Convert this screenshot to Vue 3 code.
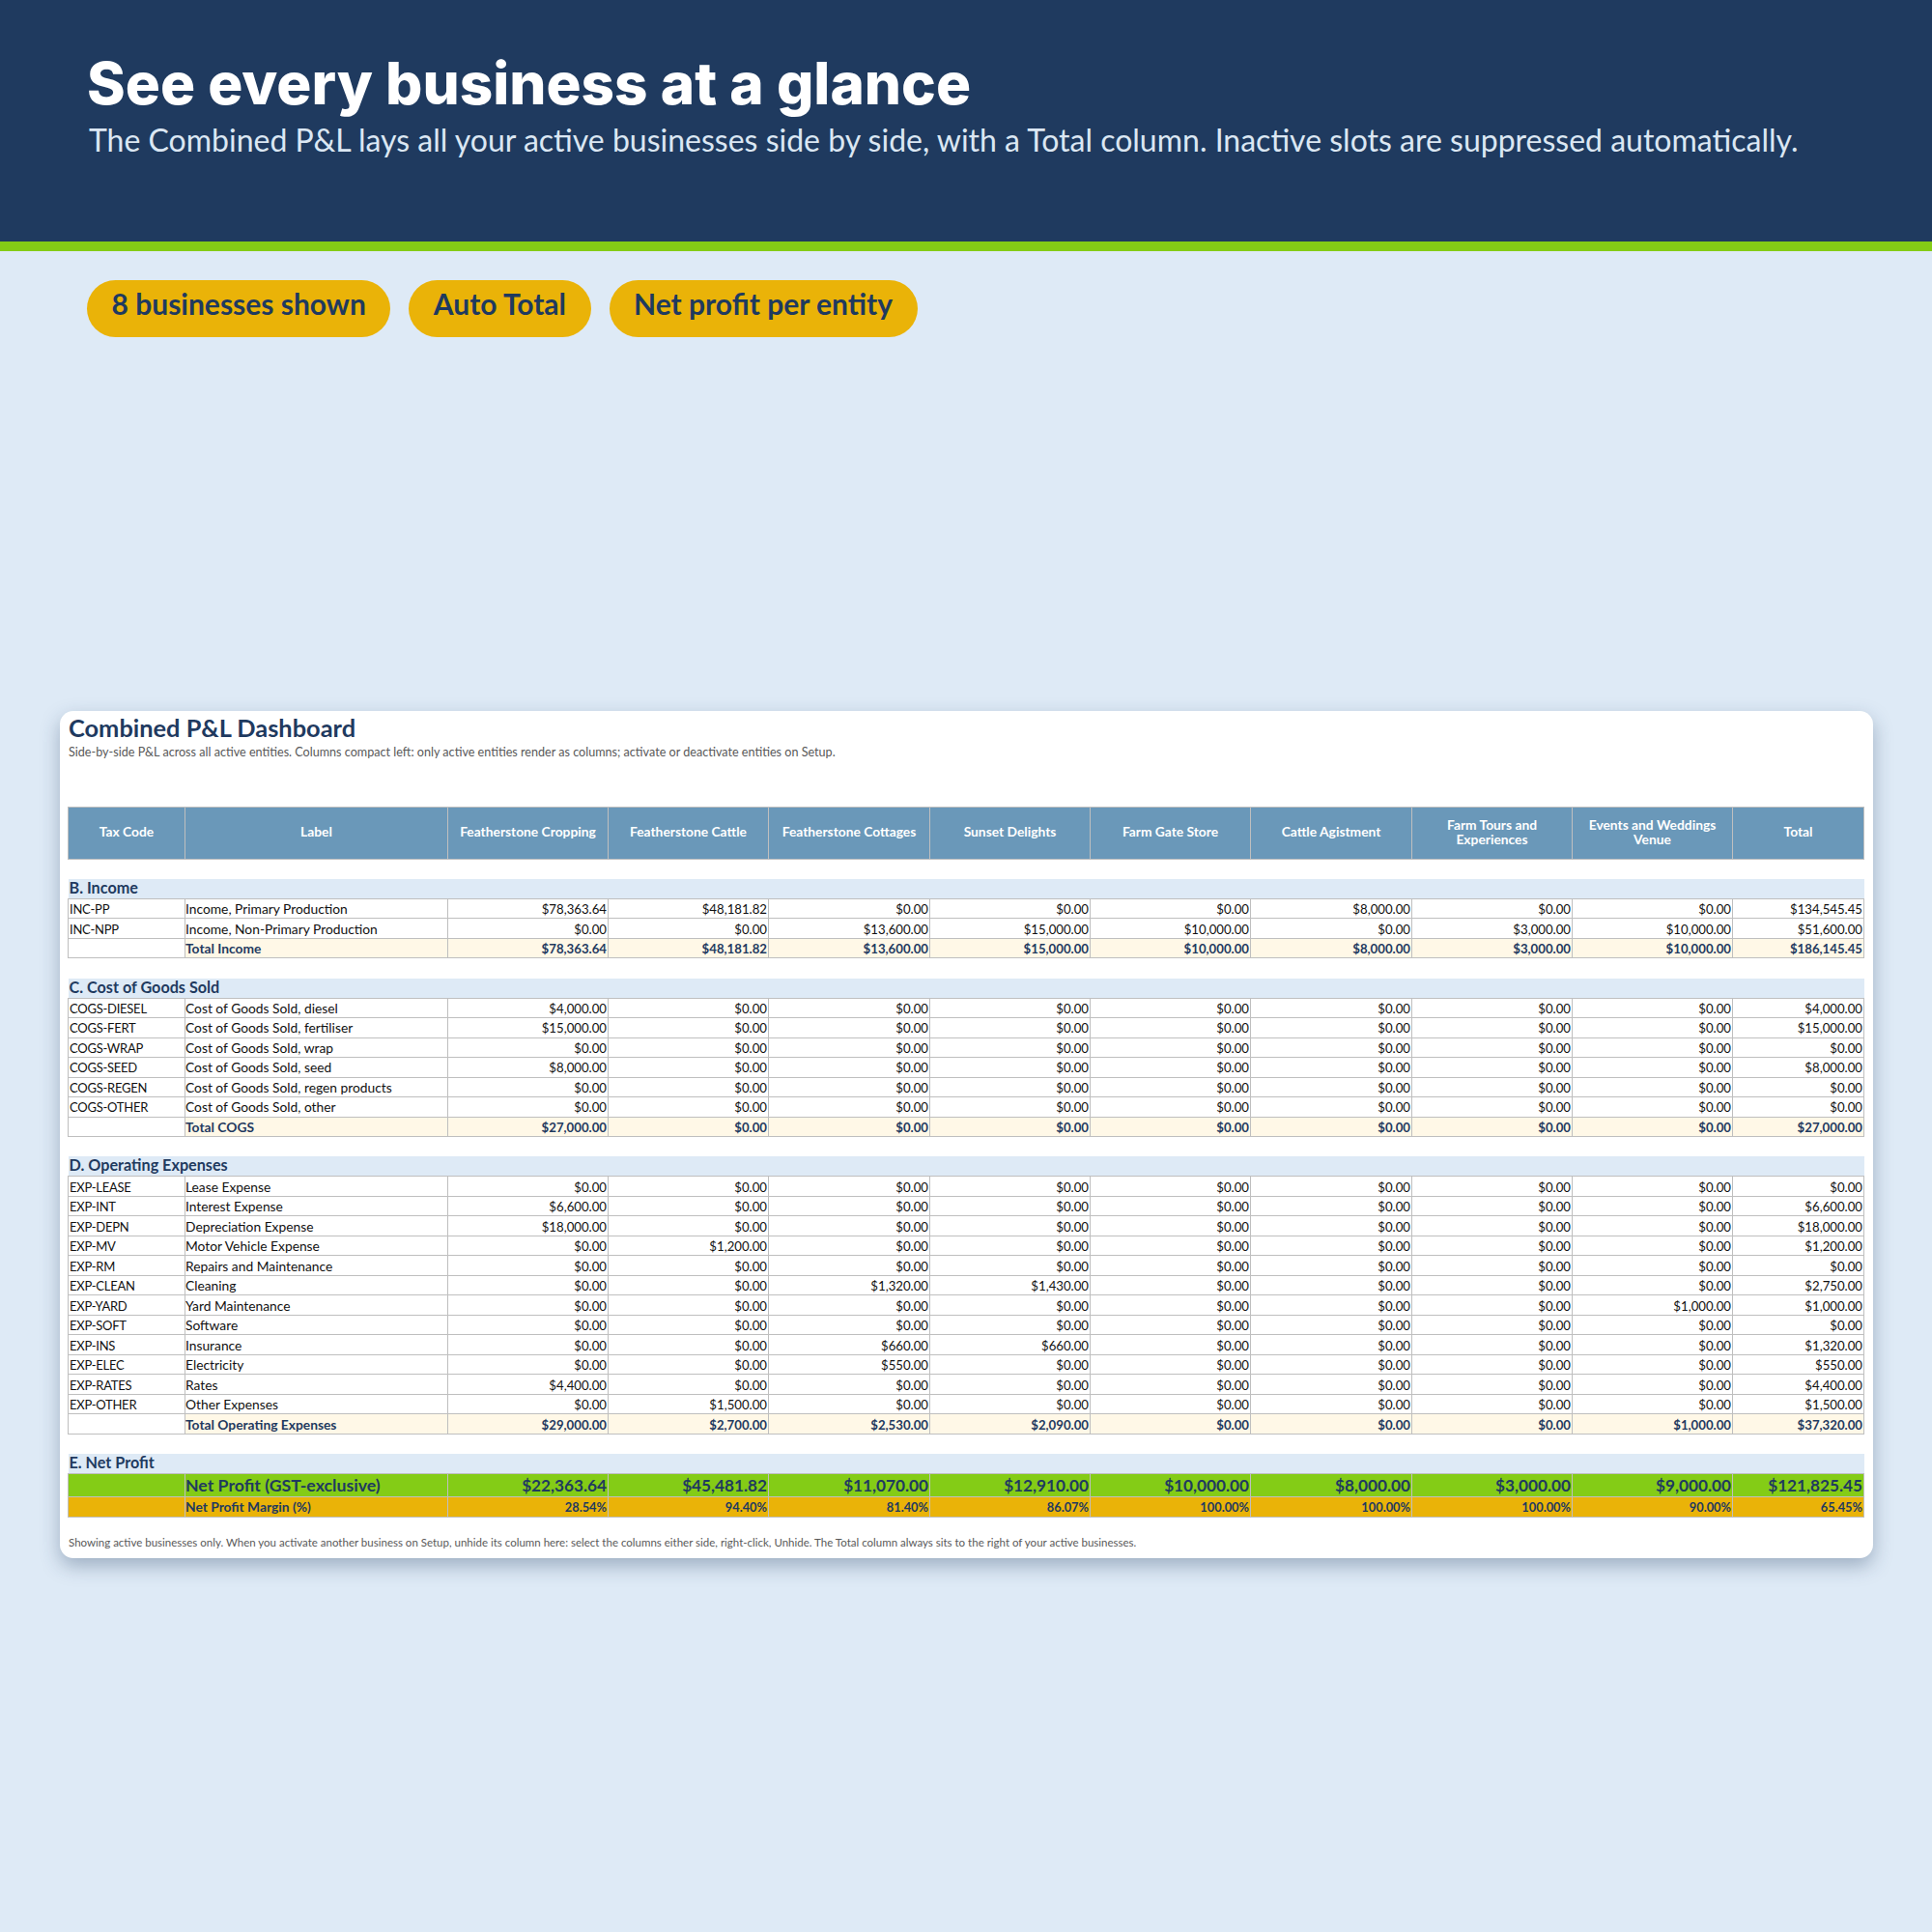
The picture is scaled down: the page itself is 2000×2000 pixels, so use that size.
<script setup>
const columns = ['Tax Code', 'Label', 'Featherstone Cropping', 'Featherstone Cattle', 'Featherstone Cottages', 'Sunset Delights', 'Farm Gate Store', 'Cattle Agistment', 'Farm Tours and Experiences', 'Events and Weddings Venue', 'Total']
const Z = '$0.00'
const pad = (o) => { const a = Array(9).fill(Z); Object.keys(o).forEach(k => { a[k] = o[k] }); return a }
const sections = [
  { title: 'B. Income', rows: [
    ['INC-PP', 'Income, Primary Production', pad({ 0: '$78,363.64', 1: '$48,181.82', 5: '$8,000.00', 8: '$134,545.45' })],
    ['INC-NPP', 'Income, Non-Primary Production', pad({ 2: '$13,600.00', 3: '$15,000.00', 4: '$10,000.00', 6: '$3,000.00', 7: '$10,000.00', 8: '$51,600.00' })]
  ], total: ['Total Income', ['$78,363.64', '$48,181.82', '$13,600.00', '$15,000.00', '$10,000.00', '$8,000.00', '$3,000.00', '$10,000.00', '$186,145.45']] },
  { title: 'C. Cost of Goods Sold', rows: [
    ['COGS-DIESEL', 'Cost of Goods Sold, diesel', pad({ 0: '$4,000.00', 8: '$4,000.00' })],
    ['COGS-FERT', 'Cost of Goods Sold, fertiliser', pad({ 0: '$15,000.00', 8: '$15,000.00' })],
    ['COGS-WRAP', 'Cost of Goods Sold, wrap', pad({})],
    ['COGS-SEED', 'Cost of Goods Sold, seed', pad({ 0: '$8,000.00', 8: '$8,000.00' })],
    ['COGS-REGEN', 'Cost of Goods Sold, regen products', pad({})],
    ['COGS-OTHER', 'Cost of Goods Sold, other', pad({})]
  ], total: ['Total COGS', pad({ 0: '$27,000.00', 8: '$27,000.00' })] },
  { title: 'D. Operating Expenses', rows: [
    ['EXP-LEASE', 'Lease Expense', pad({})],
    ['EXP-INT', 'Interest Expense', pad({ 0: '$6,600.00', 8: '$6,600.00' })],
    ['EXP-DEPN', 'Depreciation Expense', pad({ 0: '$18,000.00', 8: '$18,000.00' })],
    ['EXP-MV', 'Motor Vehicle Expense', pad({ 1: '$1,200.00', 8: '$1,200.00' })],
    ['EXP-RM', 'Repairs and Maintenance', pad({})],
    ['EXP-CLEAN', 'Cleaning', pad({ 2: '$1,320.00', 3: '$1,430.00', 8: '$2,750.00' })],
    ['EXP-YARD', 'Yard Maintenance', pad({ 7: '$1,000.00', 8: '$1,000.00' })],
    ['EXP-SOFT', 'Software', pad({})],
    ['EXP-INS', 'Insurance', pad({ 2: '$660.00', 3: '$660.00', 8: '$1,320.00' })],
    ['EXP-ELEC', 'Electricity', pad({ 2: '$550.00', 8: '$550.00' })],
    ['EXP-RATES', 'Rates', pad({ 0: '$4,400.00', 8: '$4,400.00' })],
    ['EXP-OTHER', 'Other Expenses', pad({ 1: '$1,500.00', 8: '$1,500.00' })]
  ], total: ['Total Operating Expenses', ['$29,000.00', '$2,700.00', '$2,530.00', '$2,090.00', Z, Z, Z, '$1,000.00', '$37,320.00']] }
]
const netProfit = ['$22,363.64', '$45,481.82', '$11,070.00', '$12,910.00', '$10,000.00', '$8,000.00', '$3,000.00', '$9,000.00', '$121,825.45']
const margin = ['28.54%', '94.40%', '81.40%', '86.07%', '100.00%', '100.00%', '100.00%', '90.00%', '65.45%']
const widths = [121, 272, 166, 166, 167, 166, 166, 167, 166, 166, 136]
</script>

<template>
  <div class="page">
    <header class="hero">
      <h1>See every business at a glance</h1>
      <p>The Combined P&amp;L lays all your active businesses side by side, with a Total column. Inactive slots are suppressed automatically.</p>
    </header>
    <div class="pills">
      <span class="pill">8 businesses shown</span>
      <span class="pill">Auto Total</span>
      <span class="pill">Net profit per entity</span>
    </div>
    <section class="card">
      <h2>Combined P&amp;L Dashboard</h2>
      <p class="sub">Side-by-side P&amp;L across all active entities. Columns compact left: only active entities render as columns; activate or deactivate entities on Setup.</p>
      <table>
        <colgroup>
          <col v-for="(w, i) in widths" :key="i" :style="{ width: w + 'px' }">
        </colgroup>
        <thead>
          <tr class="head">
            <th v-for="c in columns" :key="c">{{ c }}</th>
          </tr>
        </thead>
        <tbody>
          <template v-for="s in sections" :key="s.title">
            <tr class="spacer"><td colspan="11"></td></tr>
            <tr class="section"><td colspan="11">{{ s.title }}</td></tr>
            <tr v-for="r in s.rows" :key="r[0]">
              <td class="code">{{ r[0] }}</td>
              <td class="label">{{ r[1] }}</td>
              <td v-for="(v, i) in r[2]" :key="i" class="num">{{ v }}</td>
            </tr>
            <tr class="total">
              <td class="blank"></td>
              <td class="label">{{ s.total[0] }}</td>
              <td v-for="(v, i) in s.total[1]" :key="i" class="num">{{ v }}</td>
            </tr>
          </template>
          <tr class="spacer"><td colspan="11"></td></tr>
          <tr class="section"><td colspan="11">E. Net Profit</td></tr>
          <tr class="profit">
            <td></td>
            <td class="label">Net Profit (GST-exclusive)</td>
            <td v-for="(v, i) in netProfit" :key="i" class="num">{{ v }}</td>
          </tr>
          <tr class="margin">
            <td></td>
            <td class="label">Net Profit Margin (%)</td>
            <td v-for="(v, i) in margin" :key="i" class="num">{{ v }}</td>
          </tr>
        </tbody>
      </table>
      <p class="foot">Showing active businesses only. When you activate another business on Setup, unhide its column here: select the columns either side, right-click, Unhide. The Total column always sits to the right of your active businesses.</p>
    </section>
  </div>
</template>

<style>
html, body { margin: 0; background: #deeaf6; }
</style>

<style scoped>
.page {
  width: 2000px;
  height: 2000px;
  background: #deeaf6;
  font-family: Lato, "Liberation Sans", sans-serif;
  overflow: hidden;
}
.hero {
  height: 250px;
  background: #1f3a5f;
  border-bottom: 10.5px solid #84cc16;
  padding-left: 90px;
  color: #fff;
}
.hero h1 {
  margin: 0;
  padding-top: 50.5px;
  font-family: Inter, sans-serif;
  font-weight: 800;
  font-size: 60.2px;
  line-height: 72px;
}
.hero p {
  margin: 2.5px 0 0;
  padding-left: 2px;
  font-size: 32px;
  line-height: 40px;
  color: #dbe7f3;
}
.pills {
  display: flex;
  gap: 19px;
  padding: 29.5px 0 0 90px;
}
.pill {
  height: 59px;
  line-height: 49px;
  padding: 0 25.5px;
  border-radius: 30px;
  background: #eab308;
  color: #1f3a5f;
  font-weight: 700;
  font-size: 30px;
}
.card {
  width: 1877px;
  height: 877px;
  box-sizing: border-box;
  margin: 387px 0 0 62px;
  padding: 0 8px;
  background: #fff;
  border-radius: 14px;
  box-shadow: 0 8px 20px rgba(31, 58, 95, 0.34);
}
.card h2 {
  margin: 0;
  padding: 1px 0 0 1px;
  font-size: 25.4px;
  line-height: 32px;
  font-weight: 700;
  color: #1f3a5f;
}
.sub, .foot {
  margin: 0;
  font-size: 11.5px;
  line-height: 16px;
  color: #595959;
  padding-left: 1px;
}
.sub {
  font-size: 12.6px;
  padding-top: 2px;
}
table {
  margin-top: 48px;
  width: 1859px;
  table-layout: fixed;
  border-collapse: collapse;
  font-size: 13.2px;
  color: #111;
}
td, th {
  padding: 1px 1px 0 1px;
  border: 1px solid #bfbfbf;
  white-space: nowrap;
  overflow: hidden;
  height: 20.5px;
  box-sizing: border-box;
  line-height: 16px;
}
td.code {
  font-size: 13px;
  letter-spacing: -0.25px;
}
td.label {
  font-size: 13.8px;
  padding-left: 0;
}
.head th {
  height: 54px;
  background: #6a98b9;
  color: #fff;
  font-weight: 700;
  font-size: 13.8px;
  line-height: 15px;
  text-align: center;
  white-space: normal;
  padding: 0 8px 3px;
}
.num { text-align: right; }
.spacer td {
  border: 0;
  height: 20.8px;
}
.section td {
  border: 0;
  padding: 0 1px 2px;
  background: #deeaf6;
  color: #1f3a5f;
  font-weight: 700;
  font-size: 16.2px;
}
.total td {
  background: #fff8e7;
  color: #1f3a5f;
  font-weight: 700;
}
.total td.blank { background: #fff; }
.profit td {
  height: 24px;
  padding-top: 0;
  background: #84cc16;
  color: #1f3a5f;
  font-weight: 700;
  font-size: 17.2px;
}
.profit td.label { font-size: 17.7px; }
.margin td {
  background: #eab308;
  color: #1f3a5f;
  font-weight: 700;
  font-size: 12.8px;
}
.margin td.label { font-size: 13.8px; }
.foot { padding-top: 18px; }
</style>
